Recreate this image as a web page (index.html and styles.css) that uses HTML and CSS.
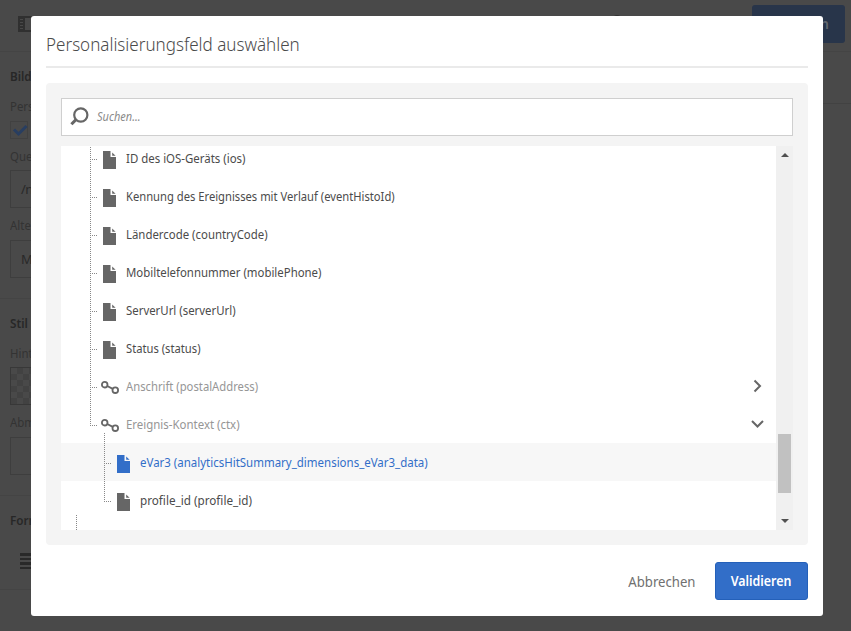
FILE: index.html
```html
<!DOCTYPE html>
<html lang="de">
<head>
<meta charset="utf-8">
<title>Personalisierungsfeld auswählen</title>
<link rel="stylesheet" href="styles.css">
</head>
<body>
<svg class="defs" width="0" height="0">
  <symbol id="file" viewBox="0 0 13 18"><path fill="currentColor" d="M0 0h7.5v6h5.5v12H0zM9.2 1.4v3.4h3.4z"/></symbol>
  <symbol id="link" viewBox="0 0 18 13"><g fill="none" stroke="#666" stroke-width="1.8"><circle cx="3.7" cy="3.7" r="2.8"/><circle cx="14.3" cy="9.2" r="2.8"/><path d="M6.2 5l5.6 2.9"/></g></symbol>
</svg>
<div class="page">
  <header class="topbar">
    <svg class="rail" width="22" height="16"><path fill="#303030" fill-rule="evenodd" d="M0 0h22v16H0zM7 2v12h13V2zM2 3h3v1H2zM2 6h3v1H2zM2 9h3v1H2zM2 12h3v1H2z"/></svg>
    <i class="dot"></i>
    <div class="save">Speichern</div>
  </header>
  <div class="subbar"></div>
  <aside class="side">
    <h2 class="s1">Bild</h2>
    <label class="s2">Personalisiert</label>
    <div class="check"><svg width="16" height="16"><path d="M2 7.5l4.5 4.5L14.5 4" fill="none" stroke="#283e61" stroke-width="3"/></svg></div>
    <label class="s3">Quelle</label>
    <div class="input">/nms</div>
    <label class="s4">Alternativ</label>
    <div class="input gap">Mein</div>
    <hr class="rule">
    <h2 class="s5">Stil</h2>
    <label class="s6">Hintergrund</label>
    <div class="input checker"></div>
    <label class="s7">Abmessung</label>
    <div class="input gap"></div>
    <hr class="rule">
    <h2 class="s8">Format</h2>
    <div class="lines"><i></i><i></i><i></i><i></i></div>
    <hr class="rule">
  </aside>
</div>
<div class="modal">
  <h1><span class="t">Personalisierungsfeld auswählen</span></h1>
  <div class="panel">
    <div class="search">
      <svg width="20" height="20"><g fill="none" stroke="#666"><circle cx="11.8" cy="8" r="6.6" stroke-width="2.2"/><path d="M7 12.6L2.4 17.2" stroke-width="3"/></g></svg>
      <span>Suchen...</span>
    </div>
    <div class="list">
      <div class="tree">
        <div class="row"><svg class="file"><use href="#file"/></svg><span style="--w:.88">ID des iOS-Geräts (ios)</span></div>
        <div class="row"><svg class="file"><use href="#file"/></svg><span style="--w:.862">Kennung des Ereignisses mit Verlauf (eventHistoId)</span></div>
        <div class="row"><svg class="file"><use href="#file"/></svg><span style="--w:.877">Ländercode (countryCode)</span></div>
        <div class="row"><svg class="file"><use href="#file"/></svg><span style="--w:.877">Mobiltelefonnummer (mobilePhone)</span></div>
        <div class="row"><svg class="file"><use href="#file"/></svg><span style="--w:.877">ServerUrl (serverUrl)</span></div>
        <div class="row"><svg class="file"><use href="#file"/></svg><span style="--w:.862">Status (status)</span></div>
        <div class="row group"><svg class="link"><use href="#link"/></svg><span style="--w:.866">Anschrift (postalAddress)</span><svg class="chev" width="14" height="14"><path d="M4.5 1.5L10 7l-5.5 5.5"/></svg></div>
        <div class="row group end"><svg class="link"><use href="#link"/></svg><span style="--w:.88">Ereignis-Kontext (ctx)</span><svg class="chev" width="14" height="14"><path d="M2 4l5.5 5.5L13 4"/></svg></div>
        <div class="row child selected"><svg class="file"><use href="#file"/></svg><span style="--w:.883">eVar3 (analyticsHitSummary_dimensions_eVar3_data)</span></div>
        <div class="row child end"><svg class="file"><use href="#file"/></svg><span style="--w:.9">profile_id (profile_id)</span></div>
        <div class="next"></div>
      </div>
      <div class="bar"><i class="up"></i><i class="thumb"></i><i class="down"></i></div>
    </div>
  </div>
  <div class="actions"><span class="cancel">Abbrechen</span><button><span>Validieren</span></button></div>
</div>
</body>
</html>
```
FILE: styles.css
```css
* { box-sizing: border-box; }
body { margin: 0; width: 851px; height: 631px; overflow: hidden; background: #494949; font-family: "Noto Sans", sans-serif; font-size: 13px; color: #4b4b4b; }
h1, h2, hr { margin: 0; font-weight: normal; }
.defs { position: absolute; }
.page { height: 631px; overflow: hidden; }
.topbar { height: 52px; display: flex; align-items: flex-start; padding: 5px 6px 0 18px; border-bottom: 1px solid #444; }
.rail { margin-top: 11px; }
.dot { width: 8px; height: 8px; margin: 10px 0 0 573px; border-radius: 4px; background: #333; }
.save { margin-left: auto; width: 93px; height: 38px; border-radius: 3px; background: #28354a; color: #626870; font-weight: 600; font-size: 14px; line-height: 38px; text-align: right; padding-right: 16px; }
.subbar { height: 52px; margin: 0 0 -52px 823px; border-bottom: 1px solid #424242; }
.side { width: 200px; }
.side > * { display: block; margin-left: 10px; line-height: 18px; }
.side h2 { font-size: 13px; font-weight: 600; color: #272727; transform: scaleX(.9); transform-origin: left; }
.side label { color: #333; transform: scaleX(.88); transform-origin: left; }
.side .s1 { padding-top: 15px; }
.s2 { padding-top: 12px; }
.check { width: 18px; height: 18px; margin-top: 6px; border: 1px solid #414141; }
.check svg { display: block; margin-left: 1px; }
.s3, .s4, .s7 { padding-top: 8px; }
.side .input { height: 38px; margin-top: 5px; border: 1px solid #3e3e3e; padding-left: 10px; line-height: 36px; letter-spacing: -.5px; color: #282828; }
.side .gap { margin-top: 6px; }
.side .rule { margin: 20px 0 0; border: 0; border-top: 1px solid #444; }
.s5, .s8 { padding-top: 15px; }
.s6 { padding-top: 12px; }
.side .checker { border-color: #383838; background: conic-gradient(#424242 25%, #494949 0 50%, #424242 0 75%, #494949 0) 0 0 / 12px 12px; }
.side .lines { margin: 24px 0 0 20px; display: grid; gap: 2px; }
.lines i { height: 2.5px; background: #292929; }
.modal { position: absolute; left: 31px; top: 16px; width: 792px; height: 600px; border-radius: 3px; background: #fff; padding: 0 15px; }
h1 { height: 52px; border-bottom: 2px solid #eaeaea; font-size: 19px; font-weight: 300; line-height: 56px; white-space: nowrap; }
.t { display: inline-block; transform: scaleX(.896); transform-origin: left; }
.panel { height: 462px; margin-top: 15px; padding: 15px; border-radius: 4px; background: #f4f4f4; }
.search { height: 38px; border: 1px solid #cfcfcf; background: #fff; display: flex; align-items: center; padding-left: 7px; gap: 8px; font-style: italic; color: #8b8b8b; font-size: 12.5px; }
.search span { transform: scaleX(.88) translateY(-1px); transform-origin: left; }
.list { height: 384px; margin-top: 10px; background: #fff; display: flex; overflow: hidden; }
.tree { flex: 1; margin-top: -7px; }
.row { position: relative; height: 38px; display: flex; align-items: center; padding-left: 42px; white-space: nowrap; }
.row span { transform: scaleX(var(--w)); transform-origin: left; }
.row::before { content: ""; position: absolute; left: 29px; top: 0; width: 1px; height: 38px; background: repeating-linear-gradient(#888 0 1px, transparent 1px 2px); }
.row::after { content: ""; position: absolute; left: 31px; top: 20px; width: 5px; height: 1px; background: repeating-linear-gradient(90deg, #888 0 1px, transparent 1px 2px); }
.row.end::before { height: 21px; }
.file { width: 13px; height: 18px; color: #666; margin: 4px 9.5px 0 0; }
.link { width: 18px; height: 13px; margin: 3px 7px 0 -2.5px; }
.group { color: #969696; }
.chev { margin: -1px 12px 0 auto; fill: none; stroke: #666; stroke-width: 2; }
.child { padding-left: 56px; }
.row.child::before { left: 43px; }
.row.child::after { left: 45px; }
.row.child.selected::before { top: -10px; height: 48px; }
.selected { background: #f7f7f7; color: #326ec8; }
.selected .file { color: #326ec8; }
.next { width: 1px; height: 19px; margin: -4px 0 0 15px; background: repeating-linear-gradient(#888 0 1px, transparent 1px 2px); }
.bar { width: 17px; background: #f0f0f0; display: flex; flex-direction: column; align-items: center; }
.up, .down { border: 4px solid transparent; }
.up { margin-top: 3px; border-bottom-color: #505050; }
.thumb { width: 13px; height: 59px; margin-top: 277px; background: #c1c1c1; }
.down { margin-top: 26px; border-top-color: #505050; }
.actions { display: flex; justify-content: flex-end; align-items: center; margin-top: 17px; gap: 20px; }
.cancel { font-size: 14px; color: #707070; transform: scaleX(.94); transform-origin: right; }
button { width: 93px; height: 38px; border: 1px solid #2460b9; border-radius: 3px; background: #326ec8; color: #fff; font: 600 13.5px "Noto Sans", sans-serif; padding: 0; }
button span { display: inline-block; transform: scaleX(.92); }
```
